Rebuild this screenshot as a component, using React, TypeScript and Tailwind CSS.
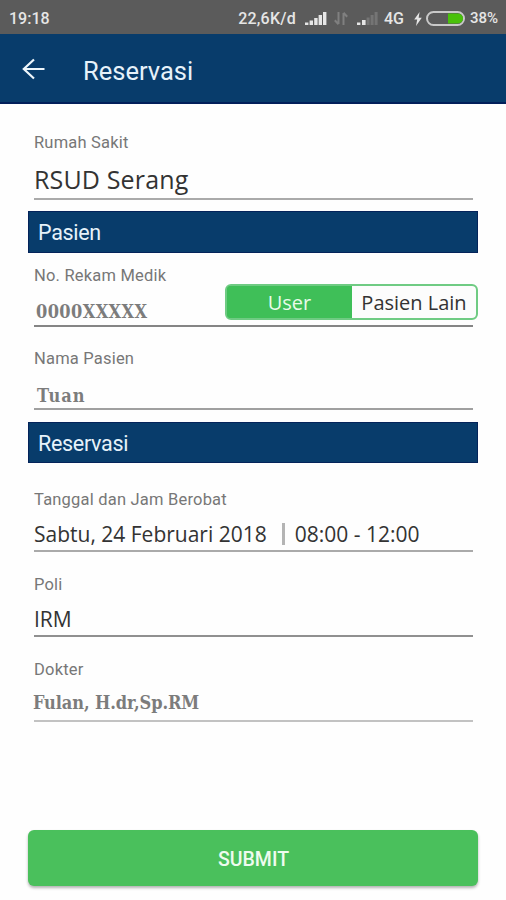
import { useState } from "react";

interface FieldProps {
  label: string;
  value: React.ReactNode;
  className: string;
  valueClassName: string;
}

function Field({ label, value, className, valueClassName }: FieldProps) {
  return (
    <div className={`mr-[5px] ml-[6px] ${className}`}>
      <div className="h-5 font-['Roboto',sans-serif] text-[16.5px] leading-[21px] tracking-[0.2px] text-[#777777]">
        {label}
      </div>
      <div className={`border-b-2 whitespace-pre ${valueClassName}`}>{value}</div>
    </div>
  );
}

function SectionTitle({ title, className }: { title: string; className: string }) {
  return (
    <h2
      className={`flex items-center border border-[#04235a] bg-[#083c6b] pt-[3px] pl-[9px] font-['Roboto',sans-serif] text-[21.5px] tracking-[-0.3px] text-[#e6f2fa] ${className}`}
    >
      {title}
    </h2>
  );
}

function StatusBar() {
  return (
    <div className="flex h-[34px] items-center justify-between bg-[#5b5b5b] pt-[3px] pr-[8px] pl-[9px] font-['Roboto',sans-serif] text-[16px] font-medium text-[#e6e6e6]">
      <span>19:18</span>
      <div className="flex items-center">
        <span className="tracking-[0.2px]">22,6K/d</span>
        {/* signal 1 */}
        <svg className="ml-[9px]" width="22" height="15" viewBox="0 0 22 15" fill="#e6e6e6">
          <rect x="0" y="11.500" width="3.4" height="2.500" />
          <rect x="4.600" y="9.500" width="3.4" height="4.500" />
          <rect x="9.2" y="7" width="3.4" height="7" />
          <rect x="13.6" y="4" width="3.4" height="10" />
          <rect x="18" y="1" width="3.4" height="13" />
        </svg>
        {/* data arrows */}
        <svg className="ml-[7px]" width="14" height="15" viewBox="0 0 14 15" fill="none" stroke="#808080" strokeWidth="2">
          <path d="M4.5 1v12M0.8 9.2l3.7 4" />
          <path d="M9.5 14V2M9.5 1.8l3.7 4" />
        </svg>
        {/* signal 2 */}
        <svg className="ml-[9px]" width="21" height="15" viewBox="0 0 21 15" fill="#757575">
          <rect x="0" y="11.500" width="3.4" height="2.500" fill="#e6e6e6" />
          <rect x="5" y="9" width="3.6" height="5" fill="#e6e6e6" />
          <rect x="9.6" y="6.5" width="3" height="7.5" />
          <rect x="13.6" y="4" width="3" height="10" />
          <rect x="17.6" y="1" width="3" height="13" />
        </svg>
        <span className="ml-[6px]">4G</span>
        <svg className="ml-[10px]" width="8" height="14" viewBox="0 0 8 14" fill="#e6e6e6">
          <path d="M5.6 0 0.2 7.6h3L2 14l5.8-8.2H4.6z" />
        </svg>
        <svg className="ml-[4px]" width="39" height="15" viewBox="0 0 39 15">
          <rect x="1" y="1" width="37" height="13" rx="6.5" fill="none" stroke="#c9c9c9" strokeWidth="2" />
          <path d="M22 2.500H32a5 5 0 0 1 0 10H22z" fill="#49c10a" />
        </svg>
        <span className="ml-[5px] text-[15px]">38%</span>
      </div>
    </div>
  );
}

export default function App() {
  const [patient, setPatient] = useState<"user" | "other">("user");

  return (
    <div className="flex h-[900px] w-[506px] flex-col overflow-hidden bg-[#fefefe]">
      <StatusBar />

      <header className="flex h-[70px] items-center border-b-2 border-[#021f5a] bg-[#083c6b] pl-[22px]">
        <svg className="mt-[2px]" width="23" height="22" viewBox="0 0 23 22" fill="none" stroke="#eef6fb" strokeWidth="2.2">
          <path d="M22.500 11H2M12 1.500 1.800 11 12 20.500" />
        </svg>
        <h1 className="mt-[6px] ml-[38px] font-['Roboto',sans-serif] text-[25.5px] text-[#e6f2fa]">Reservasi</h1>
      </header>

      <main className="flex flex-1 flex-col px-[28px] pb-[14px] font-['Open_Sans',sans-serif] text-[#333333]">
        <Field
          label="Rumah Sakit"
          value="RSUD Serang"
          className="mt-7"
          valueClassName="mt-[10px] h-[38px] border-[#aaaaaa] text-[25px] leading-[35px] tracking-[0.15px]"
        />

        <SectionTitle title="Pasien" className="mt-[11px] h-[42px]" />

        <div className="relative">
          <Field
            label="No. Rekam Medik"
            value="0000XXXXX"
            className="mt-3"
            valueClassName="mt-3 h-[30px] border-[#858585] pl-[2px] font-['DejaVu_Serif_Condensed','DejaVu_Serif',serif] text-[18px] leading-[29px] font-bold tracking-[0.4px] text-[#7c7c7c]"
          />
          {/* patient type switch */}
          <div className="absolute top-[31px] right-0 flex h-[36px] w-[253px] overflow-hidden rounded-[6px] border-2 border-[#6fcb83] bg-[#3fbf58] text-[20px]">
            <button
              onClick={() => setPatient("user")}
              className={`w-[125px] pt-px ${patient === "user" ? "bg-[#3fbf58] text-[#e9fbea]" : "bg-[#fcfcfc]"}`}
            >
              User
            </button>
            <button
              onClick={() => setPatient("other")}
              className={`flex-1 pt-px ${patient === "other" ? "bg-[#3fbf58] text-[#e9fbea]" : "bg-[#fcfcfc]"}`}
            >
              Pasien Lain
            </button>
          </div>
        </div>

        <Field
          label="Nama Pasien"
          value="Tuan"
          className="mt-[21px]"
          valueClassName="mt-4 h-[26px] border-[#a0a0a0] pl-[3px] font-['DejaVu_Serif_Condensed','DejaVu_Serif',serif] text-[18px] leading-[24px] font-bold tracking-[1px] text-[#7c7c7c]"
        />

        <SectionTitle title="Reservasi" className="mt-3 h-[41px]" />

        <Field
          label="Tanggal dan Jam Berobat"
          value={
            <div className="flex items-center">
              <span>Sabtu, 24 Februari 2018</span>
              <span className="mr-[10px] ml-[15px] h-[22px] w-[3px] bg-[#b4b4b4]" />
              <span>08:00 - 12:00</span>
            </div>
          }
          className="mt-[26px]"
          valueClassName="mt-[9px] h-[34px] border-[#aaaaaa] text-[21px] leading-[32px]"
        />
        <Field
          label="Poli"
          value="IRM"
          className="mt-[22px]"
          valueClassName="mt-[10px] h-[33px] border-[#909090] text-[21px] leading-[30px]"
        />
        <Field
          label="Dokter"
          value="Fulan, H.dr,Sp.RM"
          className="mt-[22px]"
          valueClassName="mt-[7px] -indent-[1px] h-[36px] border-[#c2c2c2] font-['DejaVu_Serif_Condensed','DejaVu_Serif',serif] text-[18px] leading-[33px] font-bold tracking-[-0.1px] text-[#7c7c7c]"
        />

        <button className="mt-auto h-[56px] rounded-[6px] bg-[#4ac05c] pt-[3px] pl-px font-['Roboto',sans-serif] text-[19.5px] font-medium text-[#eefbef] shadow-[0_2px_3px_rgba(0,0,0,0.3)]">
          SUBMIT
        </button>
      </main>
    </div>
  );
}
